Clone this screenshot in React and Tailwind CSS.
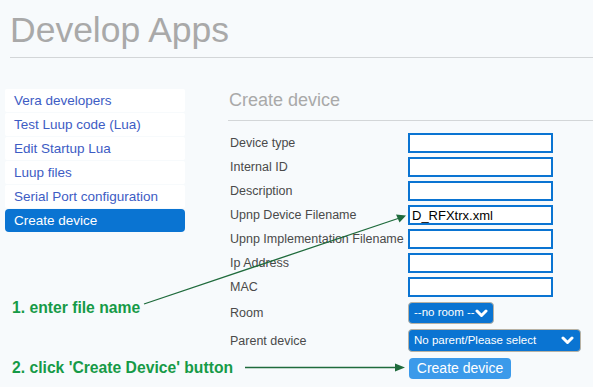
import React from 'react';

const navItems = [
  'Vera developers',
  'Test Luup code (Lua)',
  'Edit Startup Lua',
  'Luup files',
  'Serial Port configuration',
  'Create device',
];

const textFields = [
  { label: 'Device type', value: '' },
  { label: 'Internal ID', value: '' },
  { label: 'Description', value: '' },
  { label: 'Upnp Device Filename', value: 'D_RFXtrx.xml' },
  { label: 'Upnp Implementation Filename', value: '' },
  { label: 'Ip Address', value: '' },
  { label: 'MAC', value: '' },
];

function Chevron() {
  return (
    <svg width="13" height="9" viewBox="0 0 13 9" className="shrink-0">
      <path d="M2 2 L6.5 6.5 L11 2" fill="none" stroke="white" strokeWidth="3" strokeLinecap="round" strokeLinejoin="round" />
    </svg>
  );
}

function Arrows() {
  return (
    <svg className="pointer-events-none absolute left-0 top-0" width="593" height="387" viewBox="0 0 593 387">
      <line x1="144" y1="304" x2="398" y2="218.5" stroke="#1f6b3c" strokeWidth="1.3" />
      <polygon points="406,215.5 396,214.5 399.5,222.5" fill="#1f6b3c" />
      <line x1="245" y1="367.5" x2="396" y2="367.5" stroke="#1f6b3c" strokeWidth="1.3" />
      <polygon points="405,367.5 395,363.5 395,371.5" fill="#1f6b3c" />
    </svg>
  );
}

export default function App() {
  return (
    <div className="relative h-[387px] w-[593px] overflow-hidden bg-[#f7fafc] font-['Liberation_Sans',Arial,sans-serif]">
      <div className="pl-[10px] pt-[11px]">
        <h1 className="border-b border-[#d3d6d8] pb-[7px] text-[35.5px] leading-[39px] text-[#a9a9a9]">
          Develop Apps
        </h1>
      </div>

      <div className="flex">
        <div className="ml-[5px] w-[180px] shrink-0 pt-[31px]">
          <ul>
            {navItems.map((item, i) => {
              const active = i === navItems.length - 1;
              return (
                <li
                  key={item}
                  className={
                    active
                      ? 'mb-[1px] flex h-[23px] items-center rounded-[4px] bg-[#0a74d2] pl-[9px] pt-[2px] text-[13.5px] text-white'
                      : 'mb-[1px] flex h-[23px] items-center rounded-[2px] bg-white pl-[9px] pt-[2px] text-[13.5px] text-[#3d5cc4]'
                  }
                >
                  {item}
                </li>
              );
            })}
          </ul>

          <p className="mt-[67px] ml-[7px] whitespace-nowrap text-[15.7px] font-bold leading-[18px] text-[#169a47]">
            1. enter file name
          </p>
          <p className="mt-[42px] ml-[7px] whitespace-nowrap text-[15.7px] font-bold leading-[18px] text-[#169a47]">
            2. click 'Create Device' button
          </p>
        </div>

        <div className="ml-[43px] flex-1 pt-[31px]">
          <h2 className="border-b border-[#d3d6d8] pb-[9px] pl-[1px] pt-[1px] text-[18px] leading-[21px] text-[#a9a9a9]">
            Create device
          </h2>

          <form className="mt-[12px] pl-[2px] text-[12.5px] text-[#4a4a4a]">
            <div className="flex flex-col gap-[4px]">
              {textFields.map((field) => (
                <div key={field.label} className="flex h-[20px] items-center">
                  <label className="w-[178px] shrink-0 whitespace-nowrap pt-[1px]">{field.label}</label>
                  <input
                    readOnly
                    value={field.value}
                    className="h-[20px] w-[145px] border-2 border-[#0a74d2] bg-white px-[2px] text-[13px] text-black outline-none"
                  />
                </div>
              ))}
            </div>

            <div className="mt-[5px] flex h-[22px] items-center">
              <label className="w-[178px] shrink-0 pt-[1px]">Room</label>
              <div className="flex h-[22px] w-[86px] items-center justify-between rounded-[4px] border border-[#b8b2a4] bg-[#0a74d2] pl-[5px] pr-[5px] text-[11.5px] text-white">
                <span>--no room --</span>
                <Chevron />
              </div>
            </div>

            <div className="mt-[5px] flex h-[23px] items-center">
              <label className="w-[178px] shrink-0 pt-[1px]">Parent device</label>
              <div className="flex h-[23px] w-[173px] items-center justify-between rounded-[4px] border border-[#b8b2a4] bg-[#0a74d2] pl-[5px] pr-[6px] text-[11.5px] text-white">
                <span>No parent/Please select</span>
                <Chevron />
              </div>
            </div>

            <div className="mt-[6px] flex">
              <div className="w-[179px] shrink-0" />
              <button
                type="button"
                className="h-[21px] w-[102px] rounded-[4px] bg-[#3b9aea] text-[14px] leading-[21px] text-white"
              >
                Create device
              </button>
            </div>
          </form>
        </div>
      </div>

      <Arrows />
    </div>
  );
}
